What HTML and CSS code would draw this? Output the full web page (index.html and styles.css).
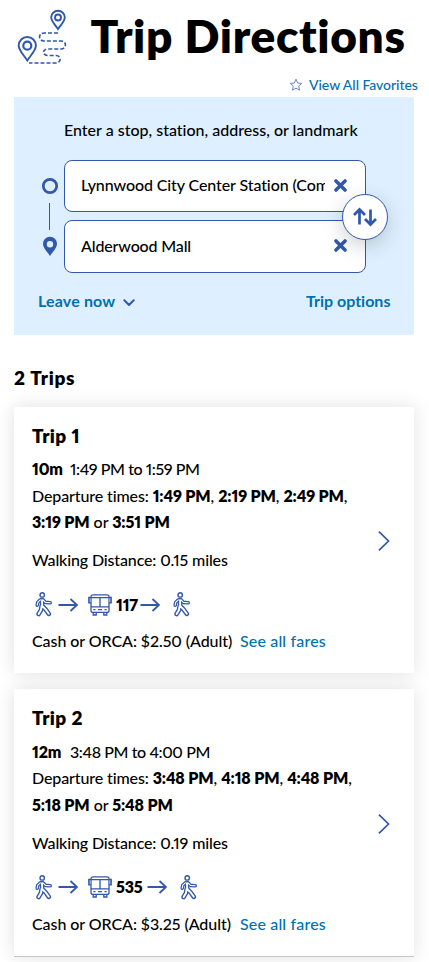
FILE: index.html
```html
<!DOCTYPE html>
<html lang="en">
<head>
<meta charset="utf-8">
<title>Trip Directions</title>
<link rel="stylesheet" href="styles.css">
</head>
<body>
<svg class="defs" width="0" height="0" aria-hidden="true">
  <symbol id="walker" viewBox="0 0 18 25">
    <g fill="none" stroke-linecap="round" stroke-linejoin="round">
      <g stroke="#3158ab" stroke-width="4.6">
        <path d="M7 8.2 7.2 14.2M7.2 14 10.6 17.4 13.8 21.8M6.6 14 6 18 3.6 22"/>
        <path stroke-width="3.6" d="M5.4 7.8 2.8 10.2 2.2 13.2M8 7.8 10.4 10.4 15.2 10.8"/>
      </g>
      <g stroke="#fff" stroke-width="1.9">
        <path d="M7 8.2 7.2 14.2M7.2 14 10.6 17.4 13.8 21.8M6.6 14 6 18 3.6 22"/>
        <path stroke-width="1.1" d="M5.4 7.8 2.8 10.2 2.2 13.2M8 7.8 10.4 10.4 15.2 10.8"/>
      </g>
      <circle cx="7.2" cy="2.9" r="2.2" stroke="#3158ab" stroke-width="1.4" fill="#fff"/>
    </g>
  </symbol>
  <symbol id="arrow" viewBox="0 0 20 14">
    <path d="M.5 7H19M12.5 1 19 7 12.5 13" fill="none" stroke="#3158ab" stroke-width="1.8"/>
  </symbol>
  <symbol id="bus" viewBox="0 0 24 22">
    <g fill="none" stroke="#3158ab" stroke-width="1.3">
      <rect x="3" y=".8" width="18" height="17.6" rx="2"/>
      <path d="M3 3.6H21M3 12.8H21M12 3.6V12.8"/>
      <path d="M3 3.5H.8V8.8H3M21 3.5H23.2V8.8H21" fill="#8fa5d3"/>
      <path d="M5.2 18.5V21H8.2V18.5M15.8 18.5V21H18.8V18.5"/>
      <path d="M5.3 15.6H7.5M10 15.6H14M16.5 15.6H18.7" stroke-width="1.4"/>
    </g>
  </symbol>
  <symbol id="clear" viewBox="0 0 12 12">
    <path d="M1.8 1.8 10.2 10.2M10.2 1.8 1.8 10.2" stroke="#3158ab" stroke-width="3.2" stroke-linecap="round"/>
  </symbol>
  <symbol id="next" viewBox="0 0 12 20">
    <path d="M.9.7 10.5 10 .9 19.3" fill="none" stroke="#3158ab" stroke-width="1.7"/>
  </symbol>
</svg>
<header class="header">
  <svg class="logo" viewBox="17 9 51 57" fill="none" stroke="#3158ab" stroke-width="1.9">
    <path d="M58 29C55 24.5 51.2 21.5 51.2 17.3a6.8 6.5 0 0 1 13.6 0C64.8 21.5 61 24.5 58 29Z"/>
    <circle cx="58" cy="17.5" r="3"/>
    <path d="M27.3 60.5C23.5 54.7 18.7 50.5 18.7 45.5a8.6 8.5 0 0 1 17.2 0C35.9 50.5 31.1 54.7 27.3 60.5Z"/>
    <circle cx="27.3" cy="45.7" r="4" stroke-width="2.2"/>
    <path d="M58 33H44C38 33 38 41 44 41H61C67 41 67 49 61 49H48C42 49 42 55.5 48 55.5H56C61.5 55.5 61.5 63 56 63H29" stroke-width="1.7" stroke-dasharray="4 2"/>
  </svg>
  <h1 class="title">Trip Directions</h1>
</header>
<div class="favorites">
  <svg class="star" viewBox="0 0 14 14"><path d="M7 1.2 8.7 5 12.8 5.4 9.7 8.1 10.6 12.2 7 10.1 3.4 12.2 4.3 8.1 1.2 5.4 5.3 5Z" fill="none" stroke="#6f87c5"/></svg>
  <a class="favorites-link">View All Favorites</a>
</div>
<section class="planner">
  <div class="prompt">Enter a stop, station, address, or landmark</div>
  <div class="route">
    <svg class="rail" viewBox="0 0 18 114">
      <circle cx="9" cy="26" r="6.7" fill="none" stroke="#3158ab" stroke-width="2.7"/>
      <path d="M8.5 43V70" stroke="#14699a"/>
      <path fill-rule="evenodd" fill="#3158ab" d="M9 96C6 91.5 2 88 2 83.8a7 7 0 0 1 14 0C16 88 12 91.5 9 96ZM9 81a3.2 3.2 0 1 0 0 6.4A3.2 3.2 0 0 0 9 81Z"/>
    </svg>
    <div class="fields">
      <div class="field"><span class="value from">Lynnwood City Center Station (Community Transit)</span><svg class="clear"><use href="#clear"/></svg></div>
      <div class="field to-field"><span class="value to">Alderwood Mall</span><svg class="clear"><use href="#clear"/></svg></div>
      <div class="swap"><svg viewBox="0 0 24 20" fill="none" stroke="#3158ab" stroke-width="2.7"><path d="M6.5 17.5V3M1 8 6.5 2.5 12 8M17.5 2.5V17M12 12 17.5 17.5 23 12"/></svg></div>
    </div>
  </div>
  <div class="options">
    <span class="leave">Leave now</span>
    <svg class="down" viewBox="0 0 12 8"><path d="M1.3 1.3 6 6 10.7 1.3" fill="none" stroke="#3158ab" stroke-width="2" stroke-linecap="round" stroke-linejoin="round"/></svg>
    <span class="trip-options">Trip options</span>
  </div>
</section>
<h2 class="count">2 Trips</h2>
<main class="trips">
  <article class="card">
    <div class="body">
      <h3 class="name">Trip 1</h3>
      <div class="line"><b class="duration">10m</b><span class="span">1:49 PM to 1:59 PM</span></div>
      <div class="line"><span class="text">Departure times:</span> <b>1:49 PM</b>, <b>2:19 PM</b>, <b>2:49 PM</b>,</div>
      <div class="line"><b>3:19 PM</b> or <b>3:51 PM</b></div>
      <div class="line walking">Walking Distance: 0.15 miles</div>
      <div class="legs"><svg class="walker"><use href="#walker"/></svg><svg class="arrow"><use href="#arrow"/></svg><svg class="bus"><use href="#bus"/></svg><b class="number">117</b><svg class="arrow"><use href="#arrow"/></svg><svg class="walker last"><use href="#walker"/></svg></div>
      <div class="line fare"><span>Cash or ORCA: $2.50 (Adult)</span><a class="fares">See all fares</a></div>
    </div>
    <svg class="next"><use href="#next"/></svg>
  </article>
  <article class="card">
    <div class="body">
      <h3 class="name">Trip 2</h3>
      <div class="line"><b class="duration">12m</b><span class="span">3:48 PM to 4:00 PM</span></div>
      <div class="line"><span class="text">Departure times:</span> <b>3:48 PM</b>, <b>4:18 PM</b>, <b>4:48 PM</b>,</div>
      <div class="line"><b>5:18 PM</b> or <b>5:48 PM</b></div>
      <div class="line walking">Walking Distance: 0.19 miles</div>
      <div class="legs"><svg class="walker"><use href="#walker"/></svg><svg class="arrow"><use href="#arrow"/></svg><svg class="bus"><use href="#bus"/></svg><b class="number wide">535</b><svg class="arrow"><use href="#arrow"/></svg><svg class="walker last"><use href="#walker"/></svg></div>
      <div class="line fare"><span>Cash or ORCA: $3.25 (Adult)</span><a class="fares">See all fares</a></div>
    </div>
    <svg class="next"><use href="#next"/></svg>
  </article>
</main>
</body>
</html>
```
FILE: styles.css
```css
* { box-sizing: border-box; }
html { overflow: hidden; }
body {
  margin: 0;
  height: 962px;
  overflow: hidden;
  background: #fff;
  color: #000;
  font: 500 16px/26.4px Lato, "Liberation Sans", sans-serif;
  font-variant-ligatures: none;
  font-variant-numeric: proportional-nums;
}
svg { display: block; flex: none; }
.defs { position: absolute; }
h1, h2, h3 { margin: 0; font-weight: 700; white-space: nowrap; }
b { font-weight: 800; letter-spacing: -.15px; }
.header { display: flex; height: 75px; padding: 9px 0 0 17px; }
.logo { width: 51px; height: 57px; }
.title { margin-left: 22.5px; padding-top: 1px; font-size: 46px; font-weight: 800; line-height: 52px; letter-spacing: .65px; }
.favorites { display: flex; justify-content: flex-end; height: 22px; padding-right: 11px; }
.star { width: 14px; height: 14px; margin: 3px 6px 0 0; }
.favorites-link { width: 109px; font-size: 14px; line-height: 20px; letter-spacing: -.05px; color: #0071b2; white-space: nowrap; }
.planner { width: 400px; height: 238px; margin-left: 14px; background: #def0ff; }
.prompt { padding: 20px 0 0 50px; white-space: nowrap; }
.route { display: flex; margin-top: 16.6px; padding-left: 27px; }
.rail { width: 18px; height: 114px; }
.fields { position: relative; width: 302px; margin-left: 5px; }
.field {
  display: flex;
  align-items: center;
  height: 52px;
  padding: 0 17px 1px 16px;
  background: #fff;
  border: 1px solid #3158ab;
  border-radius: 8px;
}
.to-field { height: 53px; margin-top: 8px; }
.value { width: 244px; overflow: hidden; white-space: nowrap; letter-spacing: -.1px; }
.to { letter-spacing: -.15px; }
.clear { width: 13px; height: 13px; margin: 0 0 1px 9px; }
.to-field .clear { margin-bottom: 2px; }
.swap {
  position: absolute;
  left: 278px;
  top: 34px;
  display: grid;
  place-items: center;
  width: 46px;
  height: 46px;
  background: #fff;
  border: 1px solid #3158ab;
  border-radius: 50%;
  box-shadow: 0 6px 20px rgba(0, 0, 0, .19);
}
.swap svg { width: 24px; height: 20px; }
.options { display: flex; align-items: center; margin-top: 14px; padding: 0 24px; font-weight: 700; color: #0071b2; white-space: nowrap; }
.leave { width: 77px; letter-spacing: .15px; }
.down { width: 12px; height: 8px; margin: 3px 0 0 8px; }
.trip-options { width: 84px; margin-left: auto; }
.count { margin: 30px 0 0 14px; font-size: 19px; font-weight: 800; line-height: 26px; letter-spacing: .7px; }
.trips { display: flex; flex-direction: column; gap: 16px; width: 400px; margin: 16px 0 0 14px; }
.card { display: flex; height: 266.4px; padding: 16px 24px 0 18px; background: #fff; box-shadow: 0 0 18px rgba(0, 0, 0, .12); }
.card:last-child { height: 268px; border-bottom: 1px solid #c8c8c8; }
.body { flex: 1; white-space: nowrap; }
.name { margin-bottom: 7.3px; font-size: 19px; font-weight: 800; line-height: 26px; letter-spacing: .4px; }
.duration { display: inline-block; width: 38px; }
.span { letter-spacing: -.4px; }
.text { letter-spacing: -.12px; }
.walking { margin-top: 11.6px; letter-spacing: -.14px; }
.legs { display: flex; align-items: center; height: 24px; margin-top: 19.2px; padding-left: 3px; }
.walker { width: 18px; height: 25px; }
.arrow { width: 20px; height: 14px; margin-left: 5px; }
.bus { width: 24px; height: 22px; margin-left: 10px; }
.number { width: 24px; margin-left: 4px; }
.number.wide { width: 31px; }
.number + .arrow { margin-left: 0; }
.walker.last { margin-left: 13px; }
.fare { display: flex; margin-top: 11.6px; }
.fare span { width: 208px; letter-spacing: -.06px; }
.fares { color: #0071b2; letter-spacing: .15px; }
.next { width: 12px; height: 20px; margin-top: 108.3px; }
```
